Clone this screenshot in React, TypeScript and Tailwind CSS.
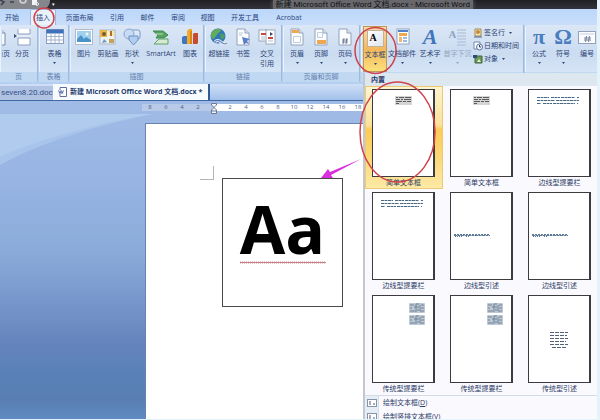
import React from "react";

const ui = "font-['Open_Sans','Noto_Sans_CJK_SC',sans-serif]";

/* ---------- icons ---------- */

function Icon({ children, w = 18 }: { children: React.ReactNode; w?: number }) {
  return (
    <svg width={w} height={18} viewBox={`0 0 ${w} 18`} aria-hidden="true">
      {children}
    </svg>
  );
}

const CoverIcon = () => (
  <Icon>
    <path d="M2 1h8l4 4v12H2z" fill="#f6f9fd" stroke="#7c8ba6" />
    <path d="M10 1v4h4" fill="#cfdcee" stroke="#7c8ba6" />
    <path d="M4 8h7M4 11h7" stroke="#a9bbd6" />
  </Icon>
);

const BreakIcon = () => (
  <Icon>
    <path d="M5 1v5h12V1" fill="#fff" stroke="#8fa0bb" />
    <path d="M5 17V10h12v7z" fill="#fff" stroke="#8fa0bb" />
    <path d="M3 8h15" stroke="#e4edf8" strokeWidth="2" />
    <path d="M1 6l3 2-3 2z" fill="#3a4e78" />
  </Icon>
);

const TableIcon = () => (
  <Icon>
    <rect x="0.500" y="1.500" width="17" height="14" fill="#fff" stroke="#8b9dbd" />
    <rect x="0.500" y="1.500" width="17" height="4" fill="#3f70bb" />
    <path d="M1 8.500h16M1 12h16M5 6v9M9 6v9M13 6v9" stroke="#a3b4d0" />
  </Icon>
);

const PictureIcon = () => (
  <Icon>
    <rect x="0.500" y="1.500" width="17" height="15" fill="#fff" stroke="#b1bccb" />
    <rect x="2" y="3" width="14" height="11" fill="#9fd0f0" />
    <path d="M2 14v-3l4-4 3 4 2-2 5 3v2z" fill="#4a93c9" />
    <circle cx="12" cy="6" r="1.500" fill="#f4f8d8" />
  </Icon>
);

const ClipArtIcon = () => (
  <Icon>
    <rect x="1" y="2" width="15" height="14" fill="#eef1ee" stroke="#aab6c5" />
    <rect x="1" y="2" width="7" height="7" fill="#e8b547" />
    <circle cx="5" cy="6" r="2" fill="#7b5a25" />
    <rect x="10" y="3" width="5" height="5" fill="#f8e9a2" />
    <path d="M12 3v5" stroke="#b66d2a" strokeWidth="2" />
    <path d="M3 15l2-4 3 3z" fill="#6999ce" />
    <rect x="10" y="11" width="5" height="4" fill="#c3a45e" />
  </Icon>
);

const ShapesIcon = () => (
  <Icon>
    <rect x="5" y="2" width="12" height="9" rx="2" fill="#dbe8f7" stroke="#7b9aca" />
    <circle cx="6" cy="6" r="5" fill="#c7dbf3" stroke="#8aa6d2" />
    <path d="M6 8h9v4l-4.500 5L6 12z" fill="#b3cdef" stroke="#6d90c5" />
  </Icon>
);

const SmartArtIcon = () => (
  <Icon>
    <path d="M1 3h10l5 4-4 3H4l2-3z" fill="#56a35f" stroke="#3f8a52" />
    <path d="M2 16h14v-5H7l-2 2z" fill="#d5ead0" stroke="#5f9f68" />
    <path d="M4 6h7" stroke="#b7dfb9" />
  </Icon>
);

const ChartIcon = () => (
  <Icon>
    <path d="M1 9l2-1h3v8H2l-1-1z" fill="#3f76c0" />
    <path d="M6 3l2-2h3v15H6z" fill="#f2a927" />
    <path d="M9 3h2v13H9z" fill="#d88512" />
    <path d="M12 6l1-1h4v10l-1 1h-4z" fill="#cb4a2c" />
  </Icon>
);

const LinkIcon = () => (
  <Icon w={20}>
    <circle cx="9" cy="8" r="7.500" fill="#2f76bd" />
    <path d="M3 4c3-4 7-4 9-2-1 3-3 2-4 5-2 1-2 4-4 4-2-1-3-4-1-7z" fill="#62ac5c" />
    <path d="M11 6c2-1 4 0 5 2-1 3-3 4-4 3z" fill="#4c9d63" />
    <path d="M6 14c2-3 5-1 6 0s4 3 6 1" fill="none" stroke="#eef3fa" strokeWidth="3" />
    <path d="M6 14c2-3 5-1 6 0s4 3 6 1" fill="none" stroke="#7b93be" strokeWidth="1.400" />
  </Icon>
);

const pageOutline = (
  <>
    <path d="M3 1h8l4 4v12H3z" fill="#fbfcfe" stroke="#93a2ba" />
    <path d="M11 1v4h4" fill="#dbe5f2" stroke="#93a2ba" />
  </>
);

const BookmarkIcon = () => (
  <Icon>
    {pageOutline}
    <path d="M8 9l8 2-3 2 2 3-3-1-2 2z" fill="#5a7fc9" />
    <path d="M5 5h4M5 7h3" stroke="#b9c8de" />
  </Icon>
);

const CrossRefIcon = () => (
  <Icon>
    <rect x="1" y="2" width="8" height="11" fill="#fff" stroke="#9aa7bc" />
    <rect x="8" y="2" width="9" height="14" fill="#fff" stroke="#9aa7bc" />
    <path d="M3 6h5M10 10h5" stroke="#c0483e" strokeWidth="2" />
    <path d="M12 4l3 2-3 2z" fill="#39476b" />
    <path d="M3 9h4M10 13h5M3 11h4" stroke="#b2c0d5" />
  </Icon>
);

const HeaderIcon = () => (
  <Icon>
    {pageOutline}
    <path d="M4 2h7v3H4z" fill="#eda850" />
    <path d="M5.500 8.500h7v6h-7z" fill="none" stroke="#c1cddd" />
  </Icon>
);

const FooterIcon = () => (
  <Icon>
    {pageOutline}
    <path d="M5 12h9v4H5z" fill="#eda850" />
    <path d="M5.500 4.500h5v5h-5z" fill="none" stroke="#c1cddd" />
  </Icon>
);

const PageNoIcon = () => (
  <Icon>
    {pageOutline}
    <path d="M8 10l-1 6M11 10l-1 6M6 12h6M6 14h6" stroke="#5a6a88" strokeWidth="0.800" />
  </Icon>
);

const PartsIcon = () => (
  <Icon>
    <rect x="4" y="1" width="12" height="15" fill="#fff" stroke="#8fa2c0" />
    <rect x="5" y="2" width="10" height="2" fill="#4f83c9" />
    <rect x="6" y="5" width="8" height="3" fill="#eda850" />
    <rect x="6" y="9" width="3" height="5" fill="#f0b76c" />
    <path d="M10 9h4v2h-4zM10 12h4v2h-4z" fill="#9cbbe2" />
  </Icon>
);

const TextBoxIcon = () => (
  <span className="flex h-[17px] w-[17px] border border-[#c3b391] bg-gradient-to-br from-white to-[#dfe5ee] pl-[2px] font-['Liberation_Serif',serif] text-[10px] leading-[13px] font-bold text-black">
    A
  </span>
);

const DropCapIcon = () => (
  <span className="flex h-[18px] w-[18px] gap-px">
    <span className="font-['Liberation_Serif',serif] text-[11px] leading-[12px] font-bold text-[#8fa3c4]">A</span>
    <svg className="flex-1" height="18" viewBox="0 0 9 18" aria-hidden="true">
      <path d="M0 2h9M0 5h9M0 8h9M0 11h9M0 14h9M0 17h9" stroke="#a9bad4" />
    </svg>
  </span>
);

const Glyph = ({ children }: { children: string }) => (
  <span className="font-['Liberation_Serif',serif] text-[22px] leading-[18px] font-bold text-[#4a7cc0]">{children}</span>
);

const WordArtIcon = () => (
  <span className="font-['Liberation_Serif',serif] text-[22px] leading-[18px] font-bold text-[#3f77bd] italic">A</span>
);

const NumberIcon = () => (
  <Icon>
    <rect x="0.500" y="3.500" width="17" height="12" fill="#fbfcfe" stroke="#93a2ba" />
    <path d="M2 6h14" stroke="#c6d2e2" />
    <path d="M8.500 8l-1 6M11.500 8l-1 6M6 10h7M6 12h7" stroke="#5a6a88" strokeWidth="0.800" />
  </Icon>
);

/* ---------- ribbon ---------- */

function Big({
  icon,
  label,
  second,
  arrow,
  width = "w-6",
  active,
  muted,
}: {
  icon: React.ReactNode;
  label: string;
  second?: string;
  arrow?: boolean;
  width?: string;
  active?: boolean;
  muted?: boolean;
}) {
  return (
    <button
      className={`flex h-[46px] shrink-0 flex-col items-center whitespace-nowrap pt-px text-[7px] leading-[10px] ${width} ${
        active
          ? "border border-[#c09a55] bg-gradient-to-b from-[#f9dcb0] via-[#f5b75a] to-[#fbe07c]"
          : ""
      } ${muted ? "text-[#93a3bd]" : "text-[#2c4474]"}`}
    >
      <span className="flex h-5 items-center justify-center">{icon}</span>
      <span className="mt-[2px]">{label}</span>
      {second && <span>{second}</span>}
      {arrow && (
        <svg className="mt-[3px]" width="3" height="2" viewBox="0 0 3 2" aria-hidden="true">
          <path d="M0 0h3L1.500 2z" fill="currentColor" />
        </svg>
      )}
    </button>
  );
}

function Group({ title, width, children }: { title: string; width: string; children: React.ReactNode }) {
  return (
    <section
      className={`flex shrink-0 flex-col overflow-hidden rounded-[2px] border-r border-[#9fb9dc] bg-gradient-to-b from-[#dbe7f6] via-[#cbdcf1] to-[#dbe9f9] ${width}`}
    >
      <div className="flex flex-1 border-l border-[#eaf2fc] pt-px pl-px">{children}</div>
      <h2 className="h-[10px] bg-[#c0d8f1] text-center text-[7px] leading-[10px] text-[#6580b0]">{title}</h2>
    </section>
  );
}

function Small({ label, arrow, icon }: { label: string; arrow?: boolean; icon: React.ReactNode }) {
  return (
    <button className="flex h-[13px] items-center gap-px whitespace-nowrap text-[7px] leading-[13px] text-[#2c4474]">
      <svg width="10" height="10" viewBox="0 0 10 10" aria-hidden="true">
        {icon}
      </svg>
      {label}
      {arrow && (
        <svg className="ml-[3px]" width="3" height="2" viewBox="0 0 3 2" aria-hidden="true">
          <path d="M0 0h3L1.500 2z" fill="currentColor" />
        </svg>
      )}
    </button>
  );
}

function Ribbon() {
  return (
    <div className="flex h-[59px] shrink-0 gap-px overflow-hidden bg-[#b4cff0] pb-[2px]">
      <Group title="页" width="w-[38px]">
        <div className="flex w-[8px] shrink-0 justify-end overflow-hidden">
          <Big icon={<CoverIcon />} label="封面页" width="w-[21px]" />
        </div>
        <Big icon={<BreakIcon />} label="分页" />
      </Group>
      <Group title="表格" width="w-[30px]">
        <Big icon={<TableIcon />} label="表格" arrow width="w-[27px]" />
      </Group>
      <Group title="插图" width="w-[134px]">
        <Big icon={<PictureIcon />} label="图片" />
        <Big icon={<ClipArtIcon />} label="剪贴画" />
        <Big icon={<ShapesIcon />} label="形状" arrow />
        <Big icon={<SmartArtIcon />} label="SmartArt" width="w-[34px]" />
        <Big icon={<ChartIcon />} label="图表" />
      </Group>
      <Group title="链接" width="w-[77px]">
        <Big icon={<LinkIcon />} label="超链接" />
        <Big icon={<BookmarkIcon />} label="书签" />
        <Big icon={<CrossRefIcon />} label="交叉" second="引用" />
      </Group>
      <Group title="页眉和页脚" width="w-[77px]">
        <Big icon={<HeaderIcon />} label="页眉" arrow />
        <Big icon={<FooterIcon />} label="页脚" arrow />
        <Big icon={<PageNoIcon />} label="页码" arrow />
      </Group>
      <Group title="文本" width="w-[163px]">
        <Big icon={<TextBoxIcon />} label="文本框" arrow active />
        <Big icon={<PartsIcon />} label="文档部件" arrow width="w-[30px]" />
        <Big icon={<WordArtIcon />} label="艺术字" arrow width="w-[26px]" />
        <Big icon={<DropCapIcon />} label="首字下沉" arrow muted width="w-[29px]" />
        <div className="flex flex-col pl-px">
          <Small
            label="签名行"
            arrow
            icon={
              <>
                <path d="M2 1h6v7H2z" fill="#f5e6b4" stroke="#9e8750" />
                <circle cx="5" cy="4" r="2" fill="#c58a3a" />
                <path d="M1 9h8" stroke="#4d659a" />
              </>
            }
          />
          <Small
            label="日期和时间"
            icon={
              <>
                <path d="M1 1h6v7H1z" fill="#fff" stroke="#7388ab" />
                <circle cx="6.500" cy="6" r="3" fill="#eef4fb" stroke="#5e7499" />
                <path d="M6.500 4v2h1.500" fill="none" stroke="#2c4474" />
              </>
            }
          />
          <Small
            label="对象"
            arrow
            icon={
              <>
                <path d="M2 2h7v7H2z" fill="#6a9a55" stroke="#3c6240" />
                <path d="M0 1h4v3H0z" fill="#2f4b7d" />
                <path d="M4 8l2-3 2 3z" fill="#e6efd6" />
              </>
            }
          />
        </div>
      </Group>
      <Group title="符号" width="w-[76px]">
        <Big icon={<Glyph>π</Glyph>} label="公式" arrow />
        <Big icon={<Glyph>Ω</Glyph>} label="符号" arrow />
        <Big icon={<NumberIcon />} label="编号" />
      </Group>
    </div>
  );
}

/* ---------- text box gallery ---------- */

const SimpleArt = () => (
  <g>
    <rect x="23" y="7" width="17" height="9" fill="#d4d4d4" />
    <path
      d="M24 8.500h2M27 8.500h5M33 8.500h6M24 10.500h4M29 10.500h2M32 10.500h7M24 12.500h6M31 12.500h3M35 12.500h4M24 14.500h3"
      stroke="#5b5b5b"
    />
  </g>
);

const SidebarArt = () => (
  <path
    d="M9 8.500h12M23 8.500h9M33 8.500h14M49 8.500h2M9 11.500h18M28 11.500h23M9 14.500h4M15 14.500h9M25 14.500h22M49 14.500h1"
    stroke="#496a86"
    strokeDasharray="3 0.500"
  />
);

const QuoteArt = () => (
  <g stroke="#5d7b96">
    <path d="M4 42.500h36" strokeDasharray="2 1" />
    <path d="M4 43.500h36" strokeDasharray="3 0.500" />
    <path d="M5 44.500h8M16 44.500h3" strokeDasharray="1 1" />
  </g>
);

const TraditionalArt = () => (
  <g>
    {[8, 20].map((y) => (
      <g key={y}>
        <rect x="37" y={y} width="16" height="10" rx="1" fill="#bcc8d4" />
        <path
          d={`M38 ${y + 2}h4M44 ${y + 1}h3M49 ${y + 2}h3M38 ${y + 5}h2M42 ${y + 4}h5M49 ${y + 5}h3M38 ${y + 8}h5M45 ${y + 7}h2M48 ${y + 8}h4M44 ${y + 1}v8M48 ${y + 2}v6`}
          stroke="#6e8295"
        />
      </g>
    ))}
  </g>
);

const CenterArt = () => (
  <path
    d="M22 37.500h18M22 40.500h17M22 43.500h18M22 46.500h16M22 49.500h18M24 52.500h14"
    stroke="#55617b"
    strokeDasharray="4 1"
  />
);

const gallery = [
  { label: "简单文本框", art: <SimpleArt />, selected: true },
  { label: "简单文本框", art: <SimpleArt /> },
  { label: "边线型提要栏", art: <SidebarArt /> },
  { label: "边线型提要栏", art: <SidebarArt /> },
  { label: "边线型引述", art: <QuoteArt /> },
  { label: "边线型引述", art: <QuoteArt /> },
  { label: "传统型提要栏", art: <TraditionalArt /> },
  { label: "传统型提要栏", art: <TraditionalArt /> },
  { label: "传统型引述", art: <CenterArt /> },
];

function GalleryMenu() {
  return (
    <div className="absolute top-[73px] right-0 bottom-0 left-[363px] flex flex-col overflow-hidden border-l-2 border-[#c3c7cf] bg-[#faf9fd]">
      <h2 className="h-[13px] shrink-0 bg-[#dde7f0] pl-[6px] text-[7px] leading-[13px] font-bold text-[#1f3263]">内置</h2>
      <div className="grid shrink-0 grid-cols-[78px_78px_78px]">
        {gallery.map((item, i) => (
          <button
            key={i}
            className={`flex h-[103px] flex-col border pt-[2px] pl-[6px] ${
              item.selected
                ? "border-[#eccb76] bg-[linear-gradient(#fdf3cf,#fbe29a_38%,#fbcb55_42%,#fbd878_70%,#fdeaa6)]"
                : "border-transparent"
            }`}
          >
            <span className="block h-[88px] w-[63px] border border-r-2 border-[#3c3c40] bg-white">
              <svg width="60" height="86" viewBox="1 1 60 86" aria-hidden="true">
                {item.art}
              </svg>
            </span>
            <span className="flex w-[63px] justify-center whitespace-nowrap text-[7px] leading-[12px] text-[#2b3b66]">
              {item.label}
            </span>
          </button>
        ))}
      </div>
      <div className="flex flex-1 flex-col border-t border-[#d3dbe6]">
        {["绘制文本框(D)", "绘制竖排文本框(V)"].map((t) => (
          <button key={t} className="flex h-[14px] shrink-0 items-stretch text-[7px] leading-[14px] text-[#2b3b66]">
            <span className="flex w-[14px] items-center justify-center border-r border-[#d5dfea] bg-[#e6eef5]">
              <svg width="10" height="8" viewBox="0 0 10 8" aria-hidden="true">
                <rect x="0.500" y="0.500" width="9" height="7" fill="#fff" stroke="#8494ab" />
                <path d="M2 3h2M2 5h2M6 5h2" stroke="#4a5f82" />
              </svg>
            </span>
            <span className="pl-[4px] whitespace-nowrap">
              {t.slice(0, -2)}
              <u>{t.slice(-2, -1)}</u>)
            </span>
          </button>
        ))}
      </div>
    </div>
  );
}

/* ---------- document ---------- */

const ruler = ["8", "6", "4", "2", "", "2", "4", "6", "8", "10", "12", "14", "16", "18"];

function Ruler() {
  return (
    <div className="ml-[142px] flex h-[22px] shrink-0 pt-[3px] text-[6px] leading-[7px] text-[#4c5f86]">
      {ruler.map((n, i) =>
        n === "" ? (
          <span key={i} className="flex h-[7px] w-4 shrink-0">
            <span className="w-2 bg-[#b7cbe9]" />
            <span className="w-2 bg-white" />
          </span>
        ) : (
          <span key={i} className={`h-[7px] w-4 shrink-0 text-center ${i < 4 ? "bg-[#b7cbe9]" : "bg-white"}`}>
            {n}
          </span>
        ),
      )}
      <svg className="absolute top-px left-[211px]" width="6" height="12" viewBox="0 0 6 12" aria-hidden="true">
        <path d="M0.500 1.500h5v1.500L3 5.500.500 3zM3 5.500L5.500 8v3.500h-5V8zM.500 9h5" fill="#f4f6fa" stroke="#6c7a95" />
      </svg>
    </div>
  );
}

function DocumentArea() {
  return (
    <main className="relative flex min-h-0 flex-1 flex-col bg-[linear-gradient(#a0bbe5,#97b4e3_25%,#8aabd9_48%,#7090c6_68%,#6583bd_76%,#5a82b8_85%,#597eb4_94%,#5f8bc2)]">
      <svg className="absolute top-[13px] left-0" width="152" height="52" viewBox="0 0 152 52" aria-hidden="true">
        <path d="M0 0h152C95 12 42 28 0 51z" fill="#a9c4ea" />
        <path d="M0 0h152C95 10 42 24 0 43z" fill="#b1cbee" />
      </svg>
      <Ruler />
      <div className="relative ml-[145px] flex flex-1 items-start border-t border-l border-[#6a83ae] bg-white pt-[42px] pl-[54px]">
        <span className="h-[14px] w-[14px] shrink-0 border-r border-b border-[#b5b5b5]" />
        <div className="mt-[12px] ml-[8px] flex h-[129px] w-[121px] shrink-0 flex-col items-center border border-[#4a4a4a]">
          <span className="mt-[13px] font-['Open_Sans',sans-serif] text-[66px] leading-[72px] font-bold text-black">Aa</span>
          <svg className="-mt-[3px]" width="86" height="3" viewBox="0 0 86 3" aria-hidden="true">
            <path d="M0 1.500h86" stroke="#d98c95" strokeWidth="2" strokeDasharray="1 1" />
            <path d="M0 1.500h86" stroke="#c77f88" strokeWidth="1" />
          </svg>
        </div>
      </div>
    </main>
  );
}

/* ---------- window ---------- */

const tabs = [
  { label: "开始", width: "w-[30px]" },
  { label: "插入", width: "w-[26px]", active: true },
  { label: "页面布局", width: "w-[47px]" },
  { label: "引用", width: "w-[28px]" },
  { label: "邮件", width: "w-[33px]" },
  { label: "审阅", width: "w-[28px]" },
  { label: "视图", width: "w-[31px]" },
  { label: "开发工具", width: "w-[44px]" },
  { label: "Acrobat", width: "w-[44px]" },
];

export default function App() {
  return (
    <div className={`h-screen overflow-hidden bg-[#e4f3fa] pr-[3px] pb-px ${ui}`}>
      <div className="relative flex h-full flex-col overflow-hidden">
        <header className="flex h-[9px] shrink-0 items-center overflow-hidden bg-gradient-to-b from-[#202023] to-[#33333a]">
          <div className="flex h-[9px] w-[50px] shrink-0 items-center gap-2 rounded-br-lg bg-[#85868c]">
            <svg width="44" height="9" viewBox="0 0 44 9" aria-hidden="true">
              <path d="M0 0l4 2-3 3M10 2h4" fill="none" stroke="#3c4152" strokeWidth="1.500" />
              <path d="M20 0a3 3 0 0 0 6 0" fill="none" stroke="#d4d6dc" strokeWidth="1.500" />
              <path d="M32 0h5v5h-5z" fill="#f4f5f8" />
              <circle cx="37" cy="4" r="1.500" fill="none" stroke="#e7e9ee" />
            </svg>
          </div>
          <span className="pl-[2px] text-[5px] leading-[5px] text-white">▾</span>
          <h1 className="mr-[124px] ml-auto flex h-[9px] items-center bg-[#68686c] px-[3px] font-['Roboto','Noto_Sans_CJK_SC',sans-serif] text-[8px] leading-[5px] whitespace-nowrap text-[#111114] shadow-[0_0_4px_#68686c]">
            新建 Microsoft Office Word 文档.docx - Microsoft Word
          </h1>
        </header>

        <nav className="flex h-4 shrink-0 bg-gradient-to-b from-[#bcd7fb] to-[#c9defa] text-[7px] text-[#2a4580]">
          {tabs.map((t) => (
            <button
              key={t.label}
              className={`shrink-0 leading-[15px] whitespace-nowrap ${t.width} ${
                t.active ? "rounded-t-[2px] border border-b-0 border-[#9db9de] bg-[#e9f1fb]" : ""
              } ${t.label === "开始" ? "pr-[6px]" : ""}`}
            >
              {t.label}
            </button>
          ))}
        </nav>

        <Ribbon />

        <div className="flex h-[17px] shrink-0 items-end border-b border-[#3f68a5] bg-gradient-to-b from-[#cfe0f7] to-[#a3c0ea] leading-[14px] whitespace-nowrap">
          <button className="h-[14px] w-[53px] bg-[#b0c3e2] pl-px text-left font-['Roboto',sans-serif] text-[8px] text-[#34518c]">
            seven8.20.docx
          </button>
          <button className="flex h-4 w-[157px] items-center gap-[3px] border-r-2 border-[#31588f] bg-[#f8fbfe] pl-[5px] text-[7px] font-bold text-[#243b6e]">
            <svg width="9" height="10" viewBox="0 0 9 10" aria-hidden="true">
              <path d="M2 .500h6.500v9H2z" fill="#fff" stroke="#5d7099" />
              <path d="M0 3h6v4H0z" fill="#e6eefa" />
              <path d="M.500 3.500L2 6.500l1-3 1 3 1.500-3" fill="none" stroke="#3a5691" strokeWidth="0.800" />
            </svg>
            新建 Microsoft Office Word 文档.docx *
          </button>
        </div>

        <DocumentArea />
        <GalleryMenu />

        <svg className="pointer-events-none absolute inset-0 h-full w-full" aria-hidden="true">
          <g fill="none" stroke="#d0424a" strokeWidth="1.500">
            <circle cx="44" cy="18" r="10" />
            <ellipse cx="375.500" cy="50.500" rx="20.500" ry="23" />
            <ellipse cx="397.500" cy="132" rx="37.500" ry="50" />
          </g>
          <path d="M321 178l7-9 2 3L361 159l-30 16 2 3z" fill="#d92fdc" />
        </svg>
      </div>
    </div>
  );
}
